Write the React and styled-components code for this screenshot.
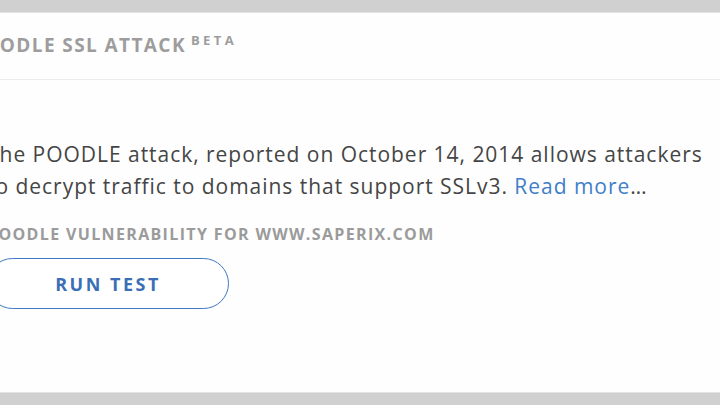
import React from "react";
import styled, { createGlobalStyle } from "styled-components";

const Global = createGlobalStyle`
  html, body { margin: 0; padding: 0; }
  body {
    background: #d0d0d0;
    font-family: "Open Sans", Lato, sans-serif;
    overflow: hidden;
  }
  * { box-sizing: border-box; }
`;

const Page = styled.div`
  width: 720px;
  height: 405px;
  padding: 12px 0;
  overflow: hidden;
`;

const Card = styled.section`
  margin-left: -40px;
  width: 800px;
  height: 381px;
  background: #fefefe;
  border-top: 1px solid #e2e2e2;
  border-bottom: 1px solid #e2e2e2;
  display: flex;
  flex-direction: column;
`;

const Header = styled.header`
  height: 67px;
  display: flex;
  align-items: center;
  padding-left: 10px;
  padding-bottom: 3px;
  border-bottom: 1px solid #ebebeb;
`;

const Title = styled.h2`
  margin: 0;
  font-size: 19px;
  font-weight: 700;
  letter-spacing: 1.4px;
  color: #9d9d9d;
  line-height: 1;
`;

const Beta = styled.sup`
  font-size: 13px;
  letter-spacing: 3.4px;
  margin-left: 5px;
  vertical-align: 7px;
`;

const Body = styled.div`
  padding: 58px 0 0 27px;
  display: flex;
  flex-direction: column;
  align-items: flex-start;
`;

const Text = styled.p`
  margin: 0;
  font-size: 21px;
  line-height: 32px;
  letter-spacing: 0.97px;
  color: #454545;
  width: 730px;
`;

const Link = styled.a`
  color: #3f80c9;
  text-decoration: none;
`;

const Label = styled.div`
  margin-top: 22px;
  font-size: 16px;
  font-weight: 700;
  letter-spacing: 1.35px;
  line-height: 20px;
  color: #9b9b9b;
`;

const Button = styled.button`
  margin-top: 14px;
  width: 242px;
  height: 51px;
  border: 1.5px solid #3f78c2;
  border-radius: 26px;
  background: #fff;
  color: #3a6fb6;
  font-family: inherit;
  font-size: 18px;
  font-weight: 700;
  letter-spacing: 2.5px;
  cursor: pointer;
`;

export default function App() {
  return (
    <Page>
      <Global />
      <Card>
        <Header>
          <Title>
            POODLE SSL ATTACK<Beta>BETA</Beta>
          </Title>
        </Header>
        <Body>
          <Text>
            The POODLE attack, reported on October 14, 2014 allows attackers to
            decrypt traffic to domains that support SSLv3.{" "}
            <Link href="#">Read more</Link>…
          </Text>
          <Label>POODLE VULNERABILITY FOR WWW.SAPERIX.COM</Label>
          <Button>RUN TEST</Button>
        </Body>
      </Card>
    </Page>
  );
}
